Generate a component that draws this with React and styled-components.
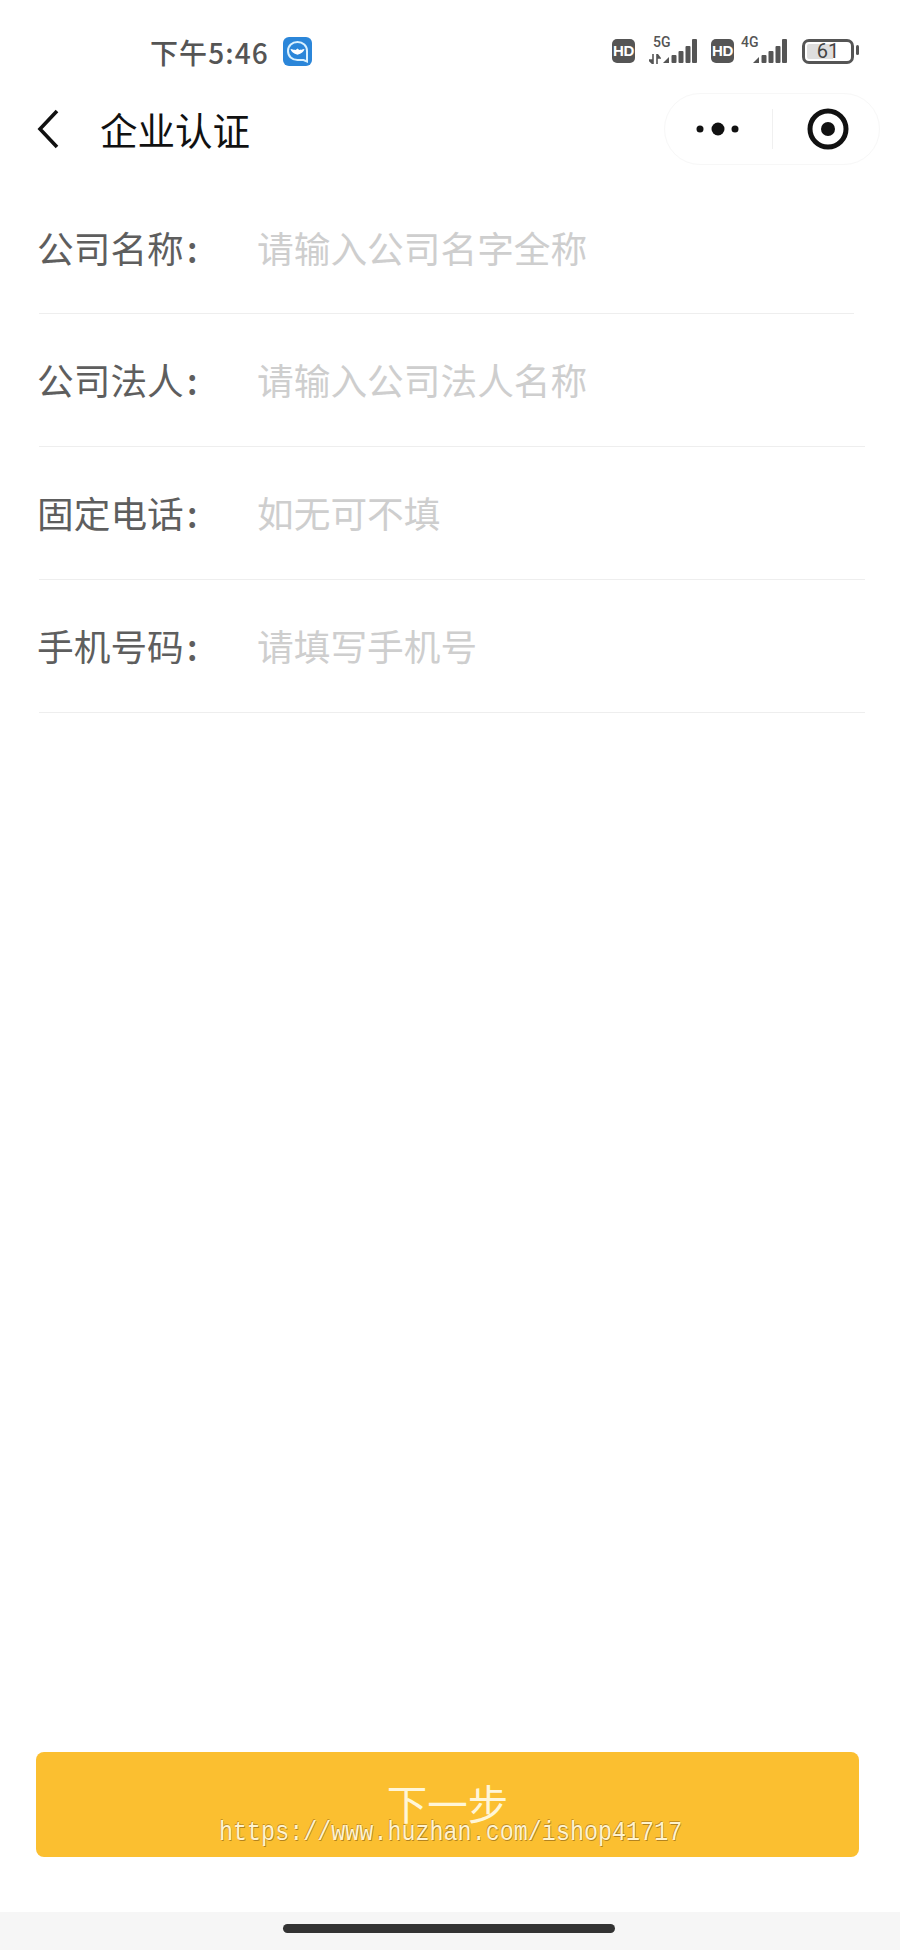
import React from "react";
import styled, { createGlobalStyle } from "styled-components";

const CJK = `"Noto Sans CJK SC", "Noto Sans", sans-serif`;

const GlobalStyle = createGlobalStyle`
  html, body {
    margin: 0;
    padding: 0;
    background: #fff;
  }
  * {
    box-sizing: border-box;
  }
`;

const Page = styled.div`
  width: 900px;
  height: 1950px;
  display: flex;
  flex-direction: column;
  background: #fff;
  font-family: ${CJK};
  overflow: hidden;
`;

const StatusBar = styled.div`
  height: 78px;
  flex: none;
  display: flex;
  align-items: center;
  padding: 26px 46px 0 150px;
  color: #555;
`;
const Time = styled.div`
  font-size: 28px;
  line-height: 1;
  font-weight: 500;
  letter-spacing: 1.1px;
  white-space: nowrap;
`;
const AppBadge = styled.svg`
  width: 29px;
  height: 29px;
  margin-left: 14px;
  margin-top: -2px;
  flex: none;
`;
const StatusRight = styled.div`
  margin-left: auto;
  display: flex;
  align-items: center;
  margin-top: -2px;
`;
const HdBadge = styled.div`
  width: 23px;
  height: 24px;
  border-radius: 5px;
  background: #555;
  color: #fff;
  font-family: "Liberation Sans", sans-serif;
  font-size: 15px;
  font-weight: 700;
  letter-spacing: -0.4px;
  line-height: 24px;
  text-align: center;
  margin-left: ${(p) => p.$gap}px;
`;
const Signal = styled.div`
  position: relative;
  width: ${(p) => p.$width}px;
  height: 24px;
  margin-left: ${(p) => p.$gap}px;
`;
const SignalLabel = styled.span`
  position: absolute;
  left: ${(p) => p.$left}px;
  top: -4px;
  font-family: Roboto, sans-serif;
  font-size: 14px;
  font-weight: 500;
  line-height: 14px;
  color: #555;
`;
const Arrows = styled.svg`
  position: absolute;
  left: 0;
  top: 15px;
  width: 12px;
  height: 10px;
`;
const Bars = styled.svg`
  position: absolute;
  right: 0;
  top: 0;
  width: 34px;
  height: 24px;
`;
const Battery = styled.div`
  position: relative;
  width: 52px;
  height: 25px;
  margin-left: 15px;
  padding: 2px;
  border: 3px solid #555;
  border-radius: 7px;
  font-family: Roboto, sans-serif;
  font-size: 20px;
  line-height: 15px;
  text-align: center;
  color: #444;
  background: linear-gradient(90deg, #dedede 61%, #fff 61%) content-box;
  &::after {
    content: "";
    position: absolute;
    right: -8px;
    top: 3px;
    width: 3px;
    height: 10px;
    border-radius: 2px;
    background: #555;
  }
`;

const NavBar = styled.div`
  height: 87px;
  flex: none;
  display: flex;
  align-items: center;
  padding: 15px 20px 0 36px;
`;
const BackIcon = styled.svg`
  width: 24px;
  height: 42px;
  flex: none;
`;
const NavTitle = styled.div`
  margin-left: 40px;
  font-size: 37.5px;
  line-height: 1;
  color: #111;
`;
const Capsule = styled.div`
  margin-left: auto;
  width: 216px;
  height: 72px;
  border: 1px solid #f7f7f7;
  border-radius: 36px;
  display: flex;
  align-items: center;
`;
const MoreIcon = styled.svg`
  width: 107px;
  height: 40px;
  flex: none;
`;
const CapsuleDivider = styled.div`
  width: 1px;
  height: 40px;
  background: #f0f0f0;
  flex: none;
`;
const TargetIcon = styled.svg`
  width: 44px;
  height: 44px;
  margin-left: 33px;
  flex: none;
`;

const Form = styled.form`
  flex: 1;
  padding: 0 35px 0 39px;
  display: flex;
  flex-direction: column;
`;
const Row = styled.label`
  height: 133px;
  flex: none;
  display: flex;
  align-items: center;
  border-bottom: 1px solid #eeeeee;
  margin-right: ${(p) => (p.$short ? 11 : 0)}px;
  padding-bottom: 2px;
  &:first-child {
    height: 150px;
    padding-top: 19px;
    margin-top: -1px;
  }
`;
const RowLabel = styled.span`
  width: 219px;
  flex: none;
  margin-left: -2px;
  margin-right: 1px;
  font-size: 36.7px;
  line-height: 1;
  color: #5e5e5e;
  white-space: nowrap;
`;
const Colon = styled.span`
  margin-left: 3px;
  font-weight: 500;
`;
const RowInput = styled.input`
  flex: 1;
  min-width: 0;
  border: none;
  outline: none;
  padding: 0;
  background: transparent;
  font-family: ${CJK};
  font-size: 36.7px;
  line-height: 50px;
  color: #333;
  &::placeholder {
    color: #cecece;
    opacity: 1;
  }
`;

const Footer = styled.div`
  flex: none;
  padding: 0 41px 55px 36px;
`;
const NextButton = styled.button`
  position: relative;
  width: 100%;
  height: 105px;
  border: none;
  border-radius: 8px;
  background: #fbbf30;
  color: #fff6d8;
  font-family: ${CJK};
  font-size: 40.5px;
  line-height: 1;
  padding: 0 0 3px;
`;
const Watermark = styled.span`
  position: absolute;
  left: 183px;
  top: 67px;
  font-family: "Liberation Mono", monospace;
  font-size: 23.4px;
  line-height: 28px;
  white-space: nowrap;
  color: #fff3cf;
  text-shadow: 0.6px 0.6px 0 rgba(130, 90, 20, 0.6), -0.6px -0.6px 0 rgba(130, 90, 20, 0.45);
  transform: scaleY(1.2);
`;

const HomeBar = styled.div`
  height: 38px;
  flex: none;
  background: #f6f6f6;
  display: flex;
  justify-content: center;
  padding-top: 12px;
`;
const HomeIndicator = styled.div`
  width: 332px;
  height: 9px;
  margin-left: -2px;
  border-radius: 5px;
  background: #333;
`;

const SignalBars = () => (
  <Bars viewBox="0 0 34 24">
    <path d="M0 24L6 18V24Z" fill="#555" />
    {[
      [8.500, 8],
      [15.500, 12],
      [22.500, 17],
      [29, 24],
    ].map(([x, h]) => (
      <rect key={x} x={x} y={24 - h} width="5" height={h} rx="1" fill="#555" />
    ))}
  </Bars>
);

const fields = [
  { label: "公司名称", placeholder: "请输入公司名字全称", short: true },
  { label: "公司法人", placeholder: "请输入公司法人名称" },
  { label: "固定电话", placeholder: "如无可不填" },
  { label: "手机号码", placeholder: "请填写手机号" },
];

const App = () => {
  return (
    <Page>
      <GlobalStyle />
      <StatusBar>
        <Time>下午5:46</Time>
        <AppBadge viewBox="0 0 29 29">
          <rect width="29" height="29" rx="6" fill="#2b86d9" />
          <path
            d="M14.500 5c-5.400 0-9.500 3.800-9.500 9s4.100 9 9.500 9h6l3.500 1.500V14c0-5.200-4.100-9-9.500-9z"
            fill="none"
            stroke="#d9f1ff"
            strokeWidth="2"
          />
          <path d="M7.500 12c2.200.5 4 .9 5.200.9l1.800-1.300 1.800 1.300c1.200 0 3-.4 5.200-.9-.8 2.800-3 4.900-7 5.700-4-.8-6.200-2.900-7-5.700z" fill="#fff" />
        </AppBadge>
        <StatusRight>
          <HdBadge $gap={0}>HD</HdBadge>
          <Signal $width={48} $gap={14}>
            <SignalLabel $left={4}>5G</SignalLabel>
            <Arrows viewBox="0 0 12 10">
              <path d="M4 0v10M4 10L0 6h4M8 10V0M8 0l3 4H8" stroke="#555" strokeWidth="1.6" fill="#555" />
            </Arrows>
            <SignalBars />
          </Signal>
          <HdBadge $gap={14}>HD</HdBadge>
          <Signal $width={34} $gap={19}>
            <SignalLabel $left={-12}>4G</SignalLabel>
            <SignalBars />
          </Signal>
          <Battery>61</Battery>
        </StatusRight>
      </StatusBar>

      <NavBar>
        <BackIcon viewBox="0 0 24 42">
          <path d="M21 3L4 21l17 18" fill="none" stroke="#111" strokeWidth="3.6" />
        </BackIcon>
        <NavTitle>企业认证</NavTitle>
        <Capsule>
          <MoreIcon viewBox="0 0 107 40">
            <circle cx="35" cy="20" r="3.500" fill="#111" />
            <circle cx="53" cy="20" r="6.500" fill="#111" />
            <circle cx="70" cy="20" r="3.500" fill="#111" />
          </MoreIcon>
          <CapsuleDivider />
          <TargetIcon viewBox="0 0 44 44">
            <circle cx="22" cy="22" r="18" fill="none" stroke="#111" strokeWidth="5" />
            <circle cx="22" cy="22" r="7" fill="#111" />
          </TargetIcon>
        </Capsule>
      </NavBar>

      <Form>
        {fields.map((f) => (
          <Row key={f.label} $short={f.short}>
            <RowLabel>
              {f.label}
              <Colon>:</Colon>
            </RowLabel>
            <RowInput placeholder={f.placeholder} />
          </Row>
        ))}
      </Form>

      <Footer>
        <NextButton type="button">
          下一步
          <Watermark>https://www.huzhan.com/ishop41717</Watermark>
        </NextButton>
      </Footer>

      <HomeBar>
        <HomeIndicator />
      </HomeBar>
    </Page>
  );
};

export default App;
